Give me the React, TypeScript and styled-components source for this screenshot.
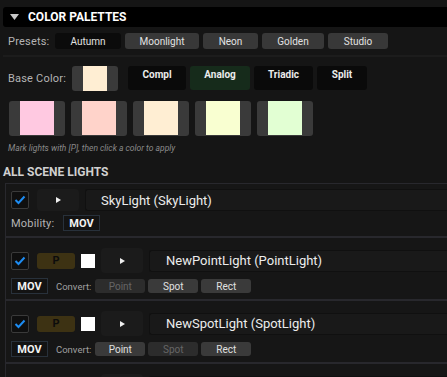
import React from 'react';
import styled, { createGlobalStyle } from 'styled-components';

const GlobalStyle = createGlobalStyle`
  body {
    margin: 0;
    background: #151515;
    font-family: Roboto, "Liberation Sans", sans-serif;
    overflow: hidden;
  }
`;

const Panel = styled.div`
  width: 470px;
  padding: 7px 0 0 3px;
  display: flex;
  flex-direction: column;
`;

const Header = styled.div`
  height: 20px;
  background: #000;
  border-radius: 3px 0 0 3px;
  display: flex;
  align-items: center;
  gap: 9px;
  padding-left: 7px;
  color: #fff;
  font-size: 12px;
  font-weight: 700;
`;

const PresetRow = styled.div`
  margin-top: 6px;
  height: 16px;
  display: flex;
  align-items: center;
  gap: 4px;
  padding-left: 5px;
`;

const Label = styled.span<{ $w?: number }>`
  width: ${(p) => (p.$w ? `${p.$w}px` : 'auto')};
  color: #b4b4b4;
  font-size: 11px;
  letter-spacing: 0.2px;
`;

const PresetButton = styled.div<{ $w: number; $active?: boolean }>`
  width: ${(p) => p.$w}px;
  height: 16px;
  border-radius: 3px;
  background: ${(p) => (p.$active ? '#0b0b0b' : '#383838')};
  color: #e2e2e2;
  font-size: 10px;
  display: flex;
  align-items: center;
  justify-content: center;
`;

const Divider = styled.div`
  margin-top: 6px;
  height: 2px;
  background: #1c1c1c;
`;

const BaseRow = styled.div`
  margin-top: 9px;
  height: 25px;
  display: flex;
  align-items: center;
  padding-left: 5px;
`;

const BaseSwatch = styled.div`
  width: 46px;
  height: 25px;
  border-radius: 3px;
  background: #3a3a3a;
  display: flex;
  justify-content: center;
`;

const BaseInner = styled.div<{ $c: string }>`
  width: 24px;
  height: 100%;
  background: ${(p) => p.$c};
`;

const Schemes = styled.div`
  margin-left: 10px;
  align-self: flex-start;
  display: flex;
  gap: 4px;
`;

const SchemeButton = styled.div<{ $w: number; $active?: boolean }>`
  width: ${(p) => p.$w}px;
  height: 24px;
  box-sizing: border-box;
  padding-top: 3px;
  border-radius: 3px;
  background: ${(p) => (p.$active ? '#162b1b' : '#0a0a0a')};
  color: #ececec;
  font-size: 10px;
  font-weight: 700;
  line-height: 12px;
  text-align: center;
`;

const SwatchRow = styled.div`
  margin-top: 10px;
  padding-left: 6px;
  display: flex;
  gap: 6px;
`;

const Swatch = styled.div`
  width: 56px;
  height: 35px;
  border-radius: 3px;
  background: #3a3a3a;
  display: flex;
  justify-content: center;
`;

const SwatchInner = styled.div<{ $c: string }>`
  width: 34px;
  height: 34px;
  background: ${(p) => p.$c};
`;

const Hint = styled.div`
  margin-top: 6px;
  padding-left: 5px;
  height: 12px;
  line-height: 12px;
  color: #8a8a8a;
  font-size: 8.5px;
  font-style: italic;
`;

const SectionTitle = styled.div`
  margin-top: 11px;
  line-height: 14px;
  color: #d0d0d0;
  font-size: 12px;
  font-weight: 700;
`;

const LightList = styled.div`
  margin-top: 4px;
  display: flex;
  flex-direction: column;
`;

const LightCard = styled.div<{ $top: number; $gap: number }>`
  margin-left: 2px;
  border: 1px solid #28282d;
  background: #161616;
  padding: ${(p) => p.$top}px 0 5px 5px;
  display: flex;
  flex-direction: column;
  gap: ${(p) => p.$gap}px;
`;

const LightRow = styled.div<{ $h: number }>`
  height: ${(p) => p.$h}px;
  display: flex;
  align-items: center;
  gap: 6px;
`;

const Check = styled.div`
  width: 18px;
  height: 18px;
  box-sizing: border-box;
  margin-right: 2px;
  border: 1px solid #3a3a3a;
  border-radius: 2px;
  background: #0f0f0f;
  display: flex;
  align-items: center;
  justify-content: center;
`;

const PButton = styled.div`
  width: 38px;
  height: 16px;
  border-radius: 3px;
  background: #3d3213;
  color: #0c0c0c;
  font-size: 11px;
  font-weight: 700;
  display: flex;
  align-items: center;
  justify-content: center;
`;

const ColorChip = styled.div`
  width: 14px;
  height: 14px;
  background: #fff;
`;

const PlayButton = styled.div<{ $h: number }>`
  width: 42px;
  height: ${(p) => p.$h}px;
  border-radius: 4px;
  background: #1b1b1b;
  display: flex;
  align-items: center;
  justify-content: center;
`;

const NameField = styled.div<{ $pad: number }>`
  flex: 1;
  height: 22px;
  box-sizing: border-box;
  border: 1px solid #101010;
  border-right: none;
  border-radius: 3px 0 0 3px;
  background: #191919;
  padding-left: ${(p) => p.$pad}px;
  display: flex;
  align-items: center;
  color: #ececec;
  font-size: 13px;
`;

const InfoRow = styled.div`
  height: 16px;
  display: flex;
  align-items: center;
`;

const MovBadge = styled.div`
  width: 37px;
  height: 16px;
  box-sizing: border-box;
  border: 1px solid #28313b;
  background: #131313;
  color: #f2f2f2;
  font-size: 11px;
  font-weight: 700;
  display: flex;
  align-items: center;
  justify-content: center;
`;

const SmallLabel = styled.span`
  margin: 0 4px 0 8px;
  color: #a0a0a0;
  font-size: 9.5px;
`;

const ConvertButton = styled.div<{ $disabled?: boolean }>`
  width: 50px;
  height: 14px;
  margin-right: 3px;
  border-radius: 3px;
  background: ${(p) => (p.$disabled ? '#2c2c2c' : '#3a3a3a')};
  color: ${(p) => (p.$disabled ? '#666' : '#e0e0e0')};
  font-size: 10px;
  display: flex;
  align-items: center;
  justify-content: center;
`;

const CheckMark = () => (
  <svg width="12" height="10" viewBox="0 0 12 10">
    <polyline points="1.5,5 4.5,8 10.5,1.5" fill="none" stroke="#1d8cf2" strokeWidth="2" />
  </svg>
);

const PlayIcon = () => (
  <svg width="6" height="6" viewBox="0 0 6 6">
    <polygon points="1,0 6,3 1,6" fill="#f0f0f0" />
  </svg>
);

const presets = [
  { name: 'Autumn', w: 66, active: true },
  { name: 'Moonlight', w: 74 },
  { name: 'Neon', w: 55 },
  { name: 'Golden', w: 62 },
  { name: 'Studio', w: 60 },
];

const schemes = [
  { name: 'Compl', w: 58 },
  { name: 'Analog', w: 60, active: true },
  { name: 'Triadic', w: 59 },
  { name: 'Split', w: 50 },
];

const swatches = ['#ffc9e1', '#ffd3ca', '#ffeed3', '#f9ffd1', '#e2ffd3'];

const lights = [
  { name: 'NewPointLight (PointLight)', disabled: 'Point' },
  { name: 'NewSpotLight (SpotLight)', disabled: 'Spot' },
  { name: 'NewRectLight (RectLight)', disabled: 'Rect' },
];

export default function App() {
  return (
    <>
      <GlobalStyle />
      <Panel>
        <Header>
          <svg width="9" height="6" viewBox="0 0 9 6">
            <polygon points="0,0 9,0 4.5,6" fill="#c8c8c8" />
          </svg>
          COLOR PALETTES
        </Header>

        <PresetRow>
          <Label $w={43}>Presets:</Label>
          {presets.map((p) => (
            <PresetButton key={p.name} $w={p.w} $active={p.active}>
              {p.name}
            </PresetButton>
          ))}
        </PresetRow>

        <Divider />

        <BaseRow>
          <Label $w={64}>Base Color:</Label>
          <BaseSwatch>
            <BaseInner $c="#ffeed3" />
          </BaseSwatch>
          <Schemes>
            {schemes.map((s) => (
              <SchemeButton key={s.name} $w={s.w} $active={s.active}>
                {s.name}
              </SchemeButton>
            ))}
          </Schemes>
        </BaseRow>

        <SwatchRow>
          {swatches.map((c) => (
            <Swatch key={c}>
              <SwatchInner $c={c} />
            </Swatch>
          ))}
        </SwatchRow>

        <Hint>Mark lights with [P], then click a color to apply</Hint>

        <SectionTitle>ALL SCENE LIGHTS</SectionTitle>

        <LightList>
          <LightCard $top={5} $gap={4}>
            <LightRow $h={22}>
              <Check>
                <CheckMark />
              </Check>
              <PlayButton $h={22}>
                <PlayIcon />
              </PlayButton>
              <NameField $pad={15}>SkyLight (SkyLight)</NameField>
            </LightRow>
            <InfoRow>
              <Label $w={52}>Mobility:</Label>
              <MovBadge>MOV</MovBadge>
            </InfoRow>
          </LightCard>

          {lights.map((l) => (
            <LightCard key={l.name} $top={10} $gap={5}>
              <LightRow $h={25}>
                <Check>
                  <CheckMark />
                </Check>
                <PButton>P</PButton>
                <ColorChip />
                <PlayButton $h={25}>
                  <PlayIcon />
                </PlayButton>
                <NameField $pad={16}>{l.name}</NameField>
              </LightRow>
              <InfoRow>
                <MovBadge>MOV</MovBadge>
                <SmallLabel>Convert:</SmallLabel>
                {['Point', 'Spot', 'Rect'].map((t) => (
                  <ConvertButton key={t} $disabled={t === l.disabled}>
                    {t}
                  </ConvertButton>
                ))}
              </InfoRow>
            </LightCard>
          ))}
        </LightList>
      </Panel>
    </>
  );
}
